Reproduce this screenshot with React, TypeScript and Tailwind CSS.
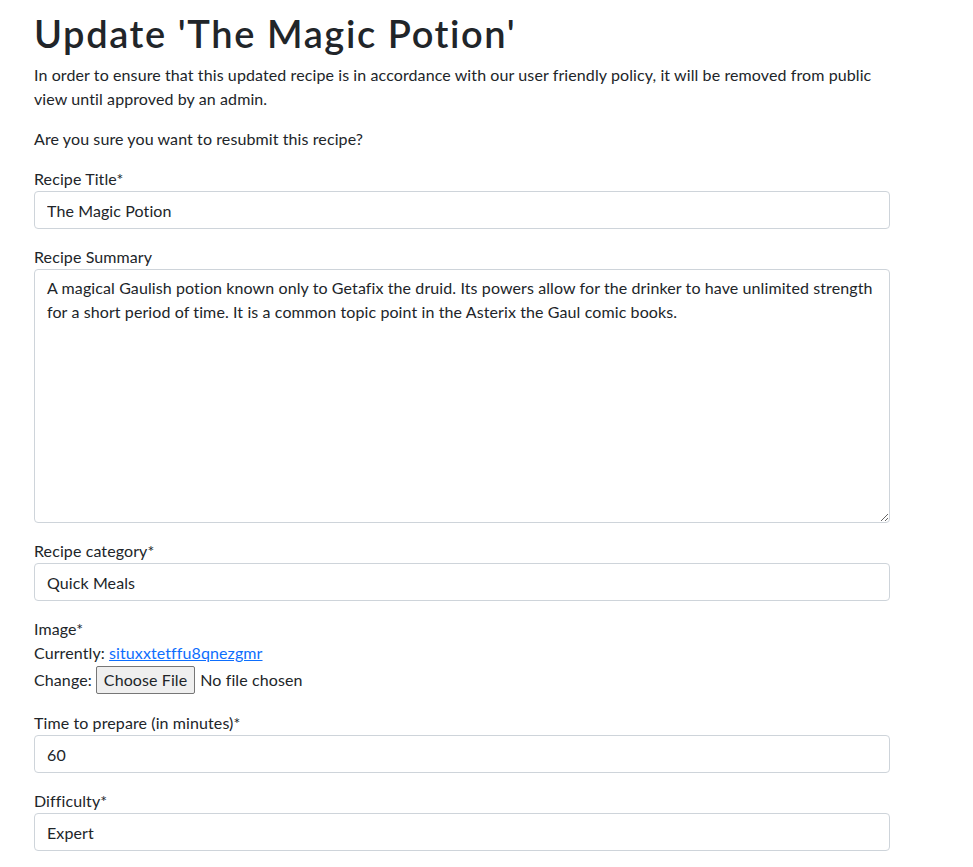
import React from "react";

const Field = ({ label, value }: { label: string; value: string }) => (
  <div className="mb-4">
    <label className="block leading-6">{label}</label>
    <input
      readOnly
      value={value}
      className="block w-full h-[38px] border border-[#ced4da] rounded bg-white px-3 text-base leading-6 tracking-[0.1px] text-[#212529] outline-none font-['Lato',sans-serif]"
    />
  </div>
);

export default function App() {
  return (
    <div className="min-h-screen bg-white px-[34px] pt-[11px] text-[#212529] font-['Lato',sans-serif] text-base tracking-[0.1px]">
      <div className="w-[856px]">
        <h1 className="text-[38px] leading-[44px] font-semibold tracking-[1.6px] mb-2">Update 'The Magic Potion'</h1>
        <p className="leading-6 mb-4">
          In order to ensure that this updated recipe is in accordance with our user friendly policy, it will be removed from public view until approved by an admin.
        </p>
        <p className="leading-6 mb-4">Are you sure you want to resubmit this recipe?</p>
        <Field label="Recipe Title*" value="The Magic Potion" />
        <div className="mb-4">
          <label className="block leading-6">Recipe Summary</label>
          <textarea
            readOnly
            value="A magical Gaulish potion known only to Getafix the druid. Its powers allow for the drinker to have unlimited strength for a short period of time. It is a common topic point in the Asterix the Gaul comic books."
            className="block w-full h-[254px] border border-[#ced4da] rounded bg-white px-3 py-1.5 text-base leading-6 tracking-[0.1px] text-[#212529] outline-none font-['Lato',sans-serif] resize-y"
          />
        </div>
        <Field label="Recipe category*" value="Quick Meals" />
        <div className="mb-4">
          <div className="leading-6">Image*</div>
          <div className="leading-6">
            Currently: <a href="#" className="text-[#0d6efd] underline">situxxtetffu8qnezgmr</a>
          </div>
          <div className="flex items-center h-[30px]">
            <span>Change:</span>
            <span className="ml-1 h-[28px] flex items-center px-[7px] bg-[#efefef] border border-[#767676] rounded-[2px]">Choose File</span>
            <span className="ml-[5px]">No file chosen</span>
          </div>
        </div>
        <Field label="Time to prepare (in minutes)*" value="60" />
        <Field label="Difficulty*" value="Expert" />
      </div>
    </div>
  );
}
